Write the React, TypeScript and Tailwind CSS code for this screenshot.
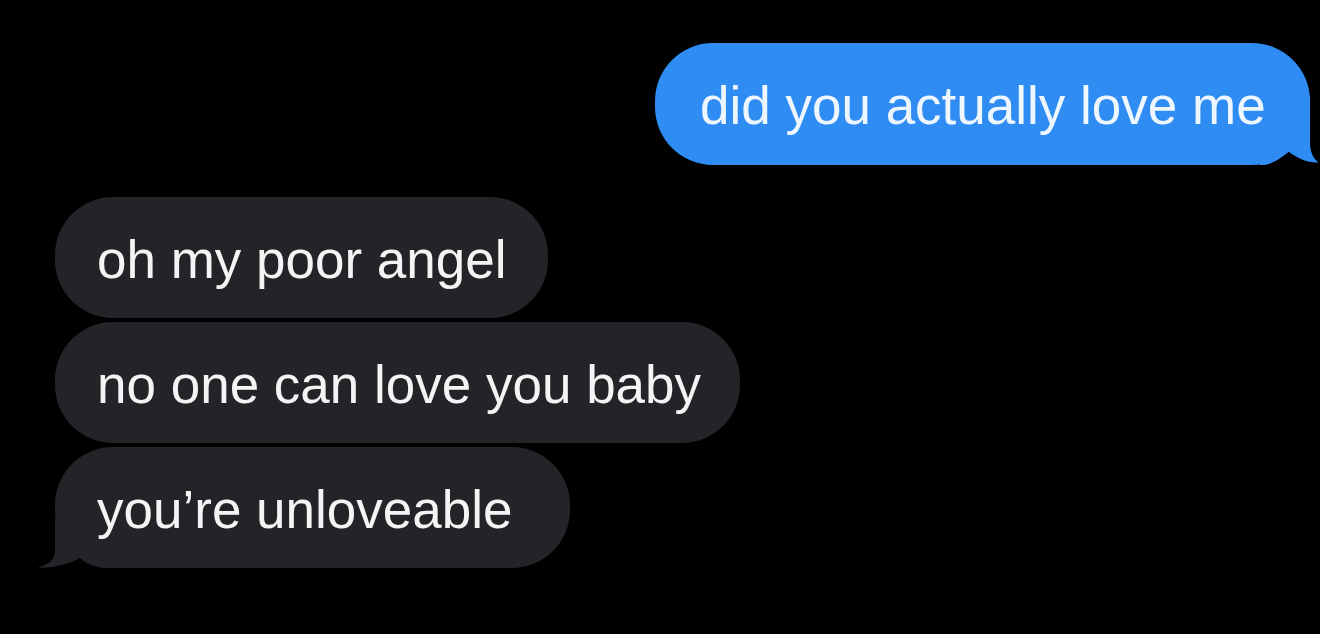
import React from 'react';

type Msg = { text: string; width: string };

const incoming: Msg[] = [
  { text: 'oh my poor angel', width: 'w-[493px]' },
  { text: 'no one can love you baby', width: 'w-[685px]' },
  { text: 'you\u2019re unloveable', width: 'w-[515px]' },
];

// tail that curls out of the bottom-right corner of the sent bubble
const BlueTail: React.FC = () => (
  <svg className="absolute right-[-10px] bottom-[-1px]" width="60" height="70" viewBox="0 0 60 70">
    <path
      d="M0 0 L50 0 L50 46 C50 56 53 62 58.5 66.5 C48 67 36 62 28 55 C22 62 14 67 5 69 L0 69 Z"
      fill="#2e8cf2"
    />
  </svg>
);

// mirrored tail for the last received bubble
const GrayTail: React.FC = () => (
  <svg className="absolute left-[-18px] bottom-[-1px]" width="80" height="50" viewBox="0 0 80 50">
    <path
      d="M80 0 L18 0 L18 31 C18 40 13 45 1 48.5 C14 49.5 30 46 43 39 C48 44 56 47.5 66 49 L80 49 Z"
      fill="#242328"
    />
  </svg>
);

const App: React.FC = () => {
  return (
    <div
      className="w-[1320px] h-[634px] bg-black overflow-hidden flex flex-col text-white"
      style={{ fontFamily: '"Liberation Sans", Arial, sans-serif' }}
    >
      <div className="flex justify-end pr-[10px] pt-[43px]">
        <div className="relative w-[655px] h-[122px] rounded-[58px] bg-[#2e8cf2] flex items-center px-[45px] pt-[3px]">
          <BlueTail />
          <span className="relative text-[53px] leading-none whitespace-nowrap text-[#eef6ff]">did you actually love me</span>
        </div>
      </div>

      <div className="flex flex-col items-start gap-[4px] pl-[55px] mt-[32px]">
        {incoming.map((m, i) => (
          <div
            key={i}
            className={`relative ${m.width} h-[121px] rounded-[58px] bg-[#242328] flex items-center px-[42px] pt-[3px]`}
          >
            {i === incoming.length - 1 && <GrayTail />}
            <span className="relative text-[53px] leading-none whitespace-nowrap text-[#f4f4f4]">{m.text}</span>
          </div>
        ))}
      </div>
    </div>
  );
};

export default App;
